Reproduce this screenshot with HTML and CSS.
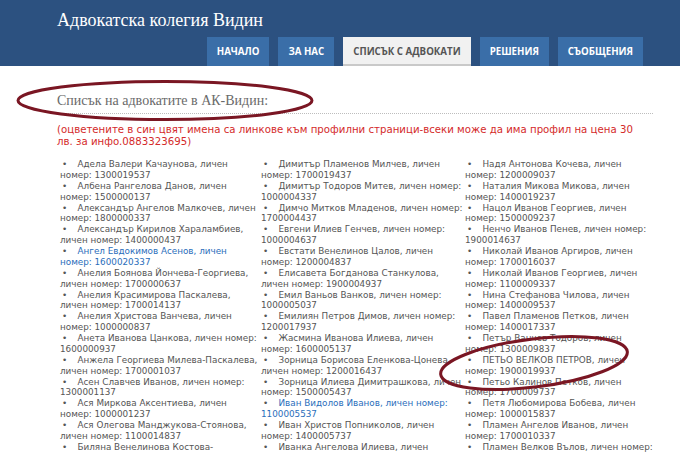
FILE: index.html
```html
<!DOCTYPE html>
<html lang="bg">
<head>
<meta charset="utf-8">
<title>Адвокатска колегия Видин</title>
<link rel="stylesheet" href="styles.css">
</head>
<body>
<header class="site-header">
  <div class="brand">Адвокатска колегия Видин</div>
  <nav class="main-nav">
    <a class="tab" href="#">НАЧАЛО</a>
    <a class="tab" href="#">ЗА НАС</a>
    <a class="tab active" href="#">СПИСЪК С АДВОКАТИ</a>
    <a class="tab" href="#">РЕШЕНИЯ</a>
    <a class="tab" href="#">СЪОБЩЕНИЯ</a>
  </nav>
</header>
<main class="content">
  <h2 class="page-title">Списък на адвокатите в АК-Видин:</h2>
  <p class="notice">(оцветените в син цвят имена са линкове към профилни страници-всеки може да има профил на цена 30<br>лв. за инфо.0883323695)</p>
  <div class="lawyers">
    <ul class="col">
      <li>Адела Валери Качаунова, личен<br>номер: 1300019537</li>
      <li>Албена Рангелова Данов, личен<br>номер: 1500000137</li>
      <li>Александър Ангелов Малкочев, личен<br>номер: 1800000337</li>
      <li>Александър Кирилов Хараламбиев,<br>личен номер: 1400000437</li>
      <li class="linked"><a href="#">Ангел Евдокимов Асенов, личен<br>номер: 1600020337</a></li>
      <li>Анелия Боянова Йончева-Георгиева,<br>личен номер: 1700000637</li>
      <li>Анелия Красимирова Паскалева,<br>личен номер: 1700014137</li>
      <li>Анелия Христова Ванчева, личен<br>номер: 1000000837</li>
      <li>Анета Иванова Цанкова, личен номер:<br>1600000937</li>
      <li>Анжела Георгиева Милева-Паскалева,<br>личен номер: 1700001037</li>
      <li>Асен Славчев Иванов, личен номер:<br>1300001137</li>
      <li>Ася Миркова Аксентиева, личен<br>номер: 1000001237</li>
      <li>Ася Олегова Манджукова-Стоянова,<br>личен номер: 1100014837</li>
      <li>Биляна Венелинова Костова-<br>Петкова, личен номер: 1700001337</li>
    </ul>
    <ul class="col">
      <li>Димитър Пламенов Милчев, личен<br>номер: 1700019437</li>
      <li>Димитър Тодоров Митев, личен номер:<br>1000004337</li>
      <li>Димчо Митков Младенов, личен номер:<br>1700004437</li>
      <li>Евгени Илиев Генчев, личен номер:<br>1000004637</li>
      <li>Евстати Венелинов Цалов, личен<br>номер: 1200004837</li>
      <li>Елисавета Богданова Станкулова,<br>личен номер: 1900004937</li>
      <li>Емил Ваньов Ванков, личен номер:<br>1000005037</li>
      <li>Емилиян Петров Димов, личен номер:<br>1200017937</li>
      <li>Жасмина Иванова Илиева, личен<br>номер: 1600005137</li>
      <li>Зорница Борисова Еленкова-Цонева,<br>личен номер: 1200016437</li>
      <li>Зорница Илиева Димитрашкова, личен<br>номер: 1500005437</li>
      <li class="linked"><a href="#">Иван Видолов Иванов, личен номер:<br>1100005537</a></li>
      <li>Иван Христов Попниколов, личен<br>номер: 1400005737</li>
      <li>Иванка Ангелова Илиева, личен<br>номер: 1200005837</li>
    </ul>
    <ul class="col">
      <li>Надя Антонова Кочева, личен<br>номер: 1200009037</li>
      <li>Наталия Микова Микова, личен<br>номер: 1400019237</li>
      <li>Нацол Иванов Георгиев, личен<br>номер: 1500009237</li>
      <li>Ненчо Иванов Пенев, личен номер:<br>1900014637</li>
      <li>Николай Иванов Аргиров, личен<br>номер: 1700016037</li>
      <li>Николай Иванов Георгиев, личен<br>номер: 1100009337</li>
      <li>Нина Стефанова Чилова, личен<br>номер: 1400009537</li>
      <li>Павел Пламенов Петков, личен<br>номер: 1400017337</li>
      <li>Петър Ванчев Тодоров, личен<br>номер: 1300009837</li>
      <li>ПЕТЬО ВЕЛКОВ ПЕТРОВ, личен<br>номер: 1900019937</li>
      <li>Петьо Калинов Петков, личен<br>номер: 1700009737</li>
      <li>Петя Любомирова Бобева, личен<br>номер: 1000015837</li>
      <li>Пламен Ангелов Иванов, личен<br>номер: 1700010337</li>
      <li>Пламен Велков Вълов, личен номер:<br>1400010437</li>
    </ul>
  </div>
</main>
<svg class="marks" width="680" height="453" viewBox="0 0 680 453" aria-hidden="true">
  <ellipse cx="165" cy="100.5" rx="147" ry="19" fill="none" stroke="#7a1623" stroke-width="3"/>
  <ellipse cx="534" cy="363" rx="94" ry="24" transform="rotate(-7 534 363)" fill="none" stroke="#7a1623" stroke-width="3"/>
</svg>
</body>
</html>
```
FILE: styles.css
```css
html, body {
  margin: 0;
  padding: 0;
  background: #ffffff;
  height: 453px;
  overflow: hidden;
}

body {
  position: relative;
  font-family: "DejaVu Sans", Verdana, sans-serif;
  color: #555555;
}

.site-header {
  background: #2c5180;
  height: 66px;
  box-sizing: border-box;
  padding: 10px 37px 0 57px;
  display: flex;
  flex-direction: column;
}

.brand {
  font-family: "Liberation Serif", "Times New Roman", serif;
  font-size: 18px;
  line-height: 21px;
  color: #ffffff;
}

.main-nav {
  margin-top: 6px;
  display: flex;
  justify-content: flex-end;
  gap: 9px;
}

.tab {
  display: flex;
  align-items: center;
  height: 29px;
  padding: 0 10px;
  background: #3a6ea8;
  color: #ffffff;
  font-family: "Open Sans", sans-serif;
  font-weight: 700;
  font-size: 9.7px;
  text-decoration: none;
  box-sizing: border-box;
}

.tab.active {
  background: #f1f1f1;
  color: #555555;
  border-bottom: 2px solid #c9c9c9;
  padding-top: 2px;
}

.content {
  padding: 0 27px 0 57px;
}

.page-title {
  margin: 25.5px 0 0;
  padding-bottom: 4px;
  border-bottom: 1px dotted #bdbdbd;
  font-family: "Liberation Serif", "Times New Roman", serif;
  font-weight: normal;
  font-size: 14px;
  line-height: 17px;
  color: #6a6a6a;
}

.notice {
  margin: 10px 0 0;
  font-size: 10.2px;
  line-height: 12.5px;
  color: #d42a2a;
  white-space: nowrap;
}

.lawyers {
  margin: 10.5px 0 0 3px;
  display: grid;
  grid-template-columns: 201px 204px 204px;
}

.col {
  margin: 0;
  padding: 0;
  list-style: none;
}

.col li {
  font-size: 8.8px;
  line-height: 10.87px;
  white-space: nowrap;
}

.col li::before {
  content: "•";
  display: inline-block;
  box-sizing: border-box;
  width: 17.5px;
  padding-left: 2px;
  color: #555555;
}

.col li.linked a {
  color: #2a6ebb;
  text-decoration: none;
}

.marks {
  position: absolute;
  left: 0;
  top: 0;
  pointer-events: none;
}
```
